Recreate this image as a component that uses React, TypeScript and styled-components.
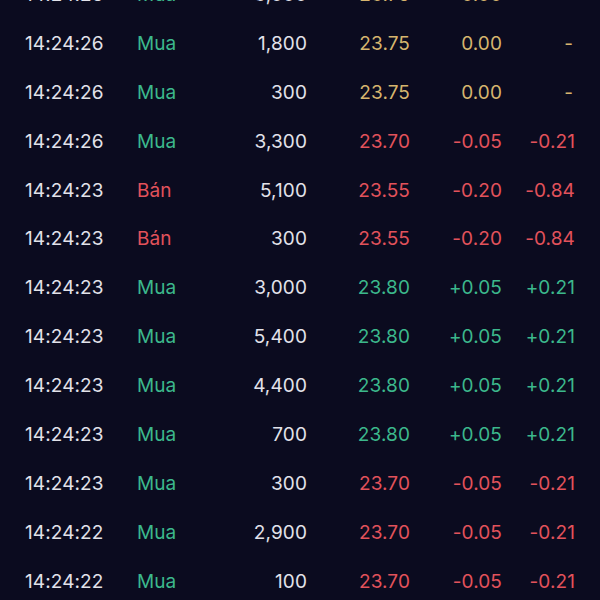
import styled, { createGlobalStyle } from "styled-components";

type Side = "buy" | "sell";
type Tone = "up" | "down" | "flat";

const trades: {
  time: string;
  side: Side;
  volume: string;
  price: string;
  change: string;
  pct: string;
  tone: Tone;
}[] = [
  { time: "14:24:26", side: "buy", volume: "3,000", price: "23.75", change: "0.00", pct: "-", tone: "flat" },
  { time: "14:24:26", side: "buy", volume: "1,800", price: "23.75", change: "0.00", pct: "-", tone: "flat" },
  { time: "14:24:26", side: "buy", volume: "300", price: "23.75", change: "0.00", pct: "-", tone: "flat" },
  { time: "14:24:26", side: "buy", volume: "3,300", price: "23.70", change: "-0.05", pct: "-0.21", tone: "down" },
  { time: "14:24:23", side: "sell", volume: "5,100", price: "23.55", change: "-0.20", pct: "-0.84", tone: "down" },
  { time: "14:24:23", side: "sell", volume: "300", price: "23.55", change: "-0.20", pct: "-0.84", tone: "down" },
  { time: "14:24:23", side: "buy", volume: "3,000", price: "23.80", change: "+0.05", pct: "+0.21", tone: "up" },
  { time: "14:24:23", side: "buy", volume: "5,400", price: "23.80", change: "+0.05", pct: "+0.21", tone: "up" },
  { time: "14:24:23", side: "buy", volume: "4,400", price: "23.80", change: "+0.05", pct: "+0.21", tone: "up" },
  { time: "14:24:23", side: "buy", volume: "700", price: "23.80", change: "+0.05", pct: "+0.21", tone: "up" },
  { time: "14:24:23", side: "buy", volume: "300", price: "23.70", change: "-0.05", pct: "-0.21", tone: "down" },
  { time: "14:24:22", side: "buy", volume: "2,900", price: "23.70", change: "-0.05", pct: "-0.21", tone: "down" },
  { time: "14:24:22", side: "buy", volume: "100", price: "23.70", change: "-0.05", pct: "-0.21", tone: "down" },
];

const toneColor = {
  up: "#3cb88c",
  down: "#e2525b",
  flat: "#d6b56e",
};

const GlobalStyle = createGlobalStyle`
  html, body {
    margin: 0;
    padding: 0;
    background: #0b0b1f;
  }
  body {
    font-family: Inter, "Liberation Sans", sans-serif;
    overflow: hidden;
  }
`;

const Page = styled.div`
  width: 600px;
  height: 600px;
  overflow: hidden;
  background: #0b0b1f;
`;

// the list is scrolled: the first row is mostly above the top edge
const List = styled.div`
  display: flex;
  flex-direction: column;
  margin-top: -30px;
`;

const Row = styled.div`
  display: grid;
  grid-template-columns: 112px 60px 110px 103px 92px 73px;
  align-items: center;
  height: 48.9px;
  padding: 0 25px;
  font-size: 19px;
  letter-spacing: 0.1px;
`;

const Time = styled.span`
  color: #e2e2ea;
`;

const SideLabel = styled.span<{ $side: Side }>`
  color: ${({ $side }) => ($side === "buy" ? toneColor.up : toneColor.down)};
`;

const Volume = styled.span`
  color: #e2e2ea;
  text-align: right;
`;

const Num = styled.span<{ $tone: Tone; $dash?: boolean }>`
  color: ${({ $tone }) => toneColor[$tone]};
  text-align: right;
  padding-right: ${({ $dash }) => ($dash ? "2px" : "0")};
`;

export default function App() {
  return (
    <Page>
      <GlobalStyle />
      <List>
        {trades.map((t, i) => (
          <Row key={i}>
            <Time>{t.time}</Time>
            <SideLabel $side={t.side}>{t.side === "buy" ? "Mua" : "Bán"}</SideLabel>
            <Volume>{t.volume}</Volume>
            <Num $tone={t.tone}>{t.price}</Num>
            <Num $tone={t.tone}>{t.change}</Num>
            <Num $tone={t.tone} $dash={t.pct === "-"}>
              {t.pct}
            </Num>
          </Row>
        ))}
      </List>
    </Page>
  );
}
